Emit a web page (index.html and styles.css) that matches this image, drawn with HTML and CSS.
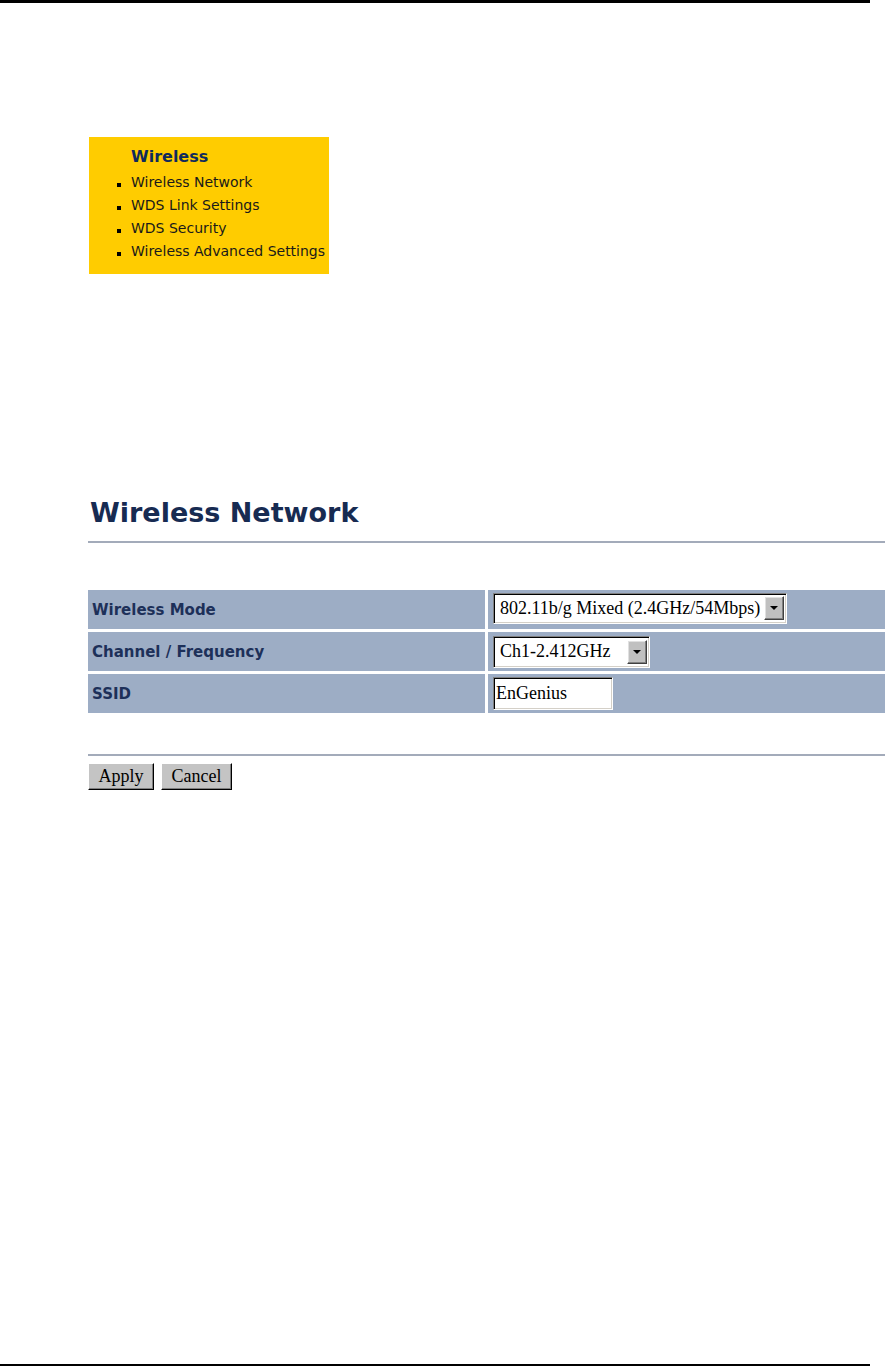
FILE: index.html
```html
<!DOCTYPE html>
<html lang="en">
<head>
    <meta charset="UTF-8">
    <meta name="viewport" content="width=device-width, initial-scale=1.0">
    <title>Wireless Network</title>
    <link rel="stylesheet" href="styles.css">
</head>
<body>
    <div class="page">
        <div class="top-rule"></div>

        <div class="menu-box">
            <h3 class="menu-title">Wireless</h3>
            <ul class="menu-list">
                <li>Wireless Network</li>
                <li>WDS Link Settings</li>
                <li>WDS Security</li>
                <li>Wireless Advanced Settings</li>
            </ul>
        </div>

        <div class="panel">
            <h1 class="panel-title">Wireless Network</h1>
            <hr class="panel-rule">

            <div class="settings">
                <div class="label">Wireless Mode</div>
                <div class="field">
                    <div class="select select-mode">
                        <span class="select-text">802.11b/g Mixed (2.4GHz/54Mbps)</span>
                        <span class="select-btn"></span>
                    </div>
                </div>

                <div class="label">Channel / Frequency</div>
                <div class="field">
                    <div class="select select-channel">
                        <span class="select-text">Ch1-2.412GHz</span>
                        <span class="select-btn"></span>
                    </div>
                </div>

                <div class="label">SSID</div>
                <div class="field">
                    <input class="text-input" type="text" value="EnGenius">
                </div>
            </div>

            <hr class="panel-rule bottom">

            <div class="form-buttons">
                <button class="btn btn-apply">Apply</button>
                <button class="btn btn-cancel">Cancel</button>
            </div>
        </div>

        <div class="bottom-rule"></div>
    </div>
</body>
</html>
```

FILE: styles.css
```css
* {
    box-sizing: border-box;
    margin: 0;
    padding: 0;
}
body {
    background-color: #ffffff;
    overflow: hidden;
}
.page {
    display: flex;
    flex-direction: column;
    height: 1367px;
    width: 100%;
}
.top-rule {
    width: 870px;
    height: 3px;
    background-color: #000000;
}
.bottom-rule {
    width: 870px;
    height: 2px;
    margin-top: auto;
    margin-bottom: 1px;
    background-color: #000000;
}

/* yellow side menu */
.menu-box {
    width: 240px;
    height: 137px;
    margin: 134px 0 0 89px;
    padding-top: 10px;
    background-color: #ffcc00;
}
.menu-title {
    padding-left: 42px;
    font-family: "DejaVu Sans", Verdana, sans-serif;
    font-size: 16px;
    line-height: 20px;
    font-weight: bold;
    color: #0f2a5c;
}
.menu-list {
    list-style: none;
    margin-top: 4px;
    padding-left: 28px;
}
.menu-list li {
    font-family: "DejaVu Sans", Verdana, sans-serif;
    font-size: 14px;
    line-height: 23px;
    color: #1a1a1a;
}
.menu-list li::before {
    content: "";
    display: inline-block;
    width: 4px;
    height: 4px;
    margin-right: 10px;
    background-color: #000000;
}

/* wireless network panel */
.panel {
    margin: 223px 0 0 88px;
}
.panel-title {
    padding-left: 2px;
    font-family: "DejaVu Sans", Verdana, sans-serif;
    font-size: 27px;
    line-height: 32px;
    font-weight: bold;
    color: #172b52;
}
.panel-rule {
    height: 2px;
    margin-top: 12px;
    border: none;
    background-color: #a3abba;
}
.panel-rule.bottom {
    margin-top: 41px;
}
.settings {
    display: grid;
    grid-template-columns: 397px 1fr;
    grid-auto-rows: 39px;
    gap: 3px;
    margin-top: 47px;
}
.label {
    display: flex;
    align-items: center;
    padding-left: 4px;
    background-color: #9dadc5;
    font-family: "DejaVu Sans", Verdana, sans-serif;
    font-size: 15px;
    font-weight: bold;
    color: #1d3059;
}
.field {
    display: flex;
    align-items: center;
    padding-left: 5px;
    background-color: #9dadc5;
}

/* old windows style controls */
.select, .text-input {
    display: flex;
    align-items: center;
    height: 31px;
    background-color: #ffffff;
    border: 1px solid;
    border-color: #808080 #ffffff #ffffff #808080;
    box-shadow: inset 1px 1px 0 #000000, inset -1px -1px 0 #d4d0c8;
    font-family: "Liberation Serif", "Times New Roman", serif;
    font-size: 18px;
    color: #000000;
}
.select {
    justify-content: space-between;
    padding: 0 2px 0 6px;
}
.select-mode {
    width: 294px;
    margin-top: -3px;
}
.select-channel {
    width: 157px;
    height: 32px;
}
.select-btn {
    position: relative;
    width: 20px;
    height: 24px;
    background-color: #c0c0c0;
    border: 1px solid;
    border-color: #ffffff #404040 #404040 #ffffff;
    box-shadow: inset -1px -1px 0 #808080, inset 1px 1px 0 #e0e0e0;
}
.select-btn::after {
    content: "";
    position: absolute;
    left: 5px;
    top: 9px;
    border-left: 4px solid transparent;
    border-right: 4px solid transparent;
    border-top: 4px solid #000000;
}
.text-input {
    width: 120px;
    height: 33px;
    padding-left: 2px;
    outline: none;
}

.form-buttons {
    display: flex;
    gap: 7px;
    margin-top: 7px;
}
.btn {
    height: 27px;
    background-color: #c4c4c4;
    border: 1px solid;
    border-color: #ffffff #000000 #000000 #ffffff;
    box-shadow: inset -1px -1px 0 #808080;
    font-family: "Liberation Serif", "Times New Roman", serif;
    font-size: 18px;
    color: #000000;
}
.btn-apply {
    width: 66px;
}
.btn-cancel {
    width: 71px;
}
```
